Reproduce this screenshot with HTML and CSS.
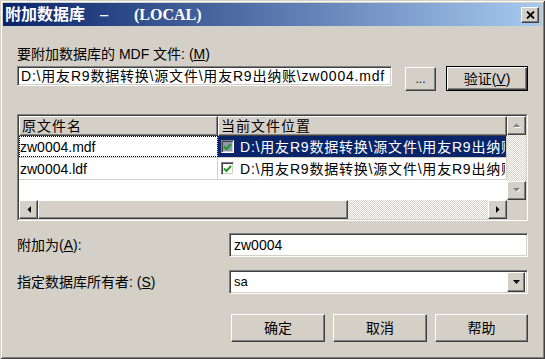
FILE: index.html
```html
<!DOCTYPE html>
<html lang="zh-CN">

<head>
    <meta charset="utf-8">
    <title>附加数据库</title>
    <link rel="stylesheet" href="styles.css">
</head>

<body>
    <div class="window">
        <!-- title bar -->
        <div class="titlebar">
            <span class="title">附加数据库<span class="dash">–</span>(LOCAL)</span>
            <button class="btn close">
                <svg width="9" height="8" viewBox="0 0 9 8"><path d="M1 0.5l7 7M8 0.5l-7 7" stroke="#000" stroke-width="1.8" fill="none"/></svg>
            </button>
        </div>

        <div class="content">
            <div class="mdf-label">要附加数据库的 MDF 文件: (<u>M</u>)</div>
            <div class="path-row">
                <div class="field path">D:\用友R9数据转换\源文件\用友R9出纳账\zw0004.mdf</div>
                <button class="btn browse">...</button>
                <button class="btn default verify">验证(<u>V</u>)</button>
            </div>

            <!-- file list -->
            <div class="files">
                <div class="files-inner">
                    <div class="files-main">
                        <div class="list">
                            <div class="list-row head">
                                <div class="hcell col-name">原文件名</div>
                                <div class="hcell col-path">当前文件位置</div>
                            </div>
                            <div class="list-row">
                                <div class="cell col-name focused">zw0004.mdf</div>
                                <div class="cell col-path selected">
                                    <span class="check">
                                        <svg width="9" height="8" viewBox="0 0 9 8"><path d="M1 3.5l2.5 2.5l4.5-5" stroke="#219821" stroke-width="2" fill="none"/></svg>
                                    </span>
                                    <span class="cell-text">D:\用友R9数据转换\源文件\用友R9出纳账</span>
                                </div>
                            </div>
                            <div class="list-row">
                                <div class="cell col-name">zw0004.ldf</div>
                                <div class="cell col-path">
                                    <span class="check">
                                        <svg width="9" height="8" viewBox="0 0 9 8"><path d="M1 3.5l2.5 2.5l4.5-5" stroke="#219821" stroke-width="2" fill="none"/></svg>
                                    </span>
                                    <span class="cell-text">D:\用友R9数据转换\源文件\用友R9出纳账</span>
                                </div>
                            </div>
                        </div>
                        <div class="vscroll">
                            <div class="btn sbtn">
                                <svg width="8" height="5" viewBox="0 0 8 5"><path d="M1 5h7l-3.5-3.5z" fill="#fff"/><path d="M0 4h7l-3.5-3.5z" fill="#808080"/></svg>
                            </div>
                            <div class="track"></div>
                            <div class="btn sbtn">
                                <svg width="8" height="5" viewBox="0 0 8 5"><path d="M1 1h7l-3.5 3.5z" fill="#fff"/><path d="M0 0h7l-3.5 3.5z" fill="#808080"/></svg>
                            </div>
                        </div>
                    </div>
                    <div class="hscroll-row">
                        <div class="hscroll">
                            <div class="btn sbtn">
                                <svg width="4" height="7" viewBox="0 0 4 7"><path d="M4 0v7L0.5 3.5z"/></svg>
                            </div>
                            <div class="btn thumb"></div>
                            <div class="track"></div>
                            <div class="btn sbtn">
                                <svg width="4" height="7" viewBox="0 0 4 7"><path d="M0 0v7L3.5 3.5z"/></svg>
                            </div>
                        </div>
                        <div class="corner"></div>
                    </div>
                </div>
            </div>

            <!-- attach options -->
            <div class="form">
                <div class="form-label">附加为(<u>A</u>):</div>
                <div class="field input">zw0004</div>
                <div class="form-label">指定数据库所有者: (<u>S</u>)</div>
                <div class="field combo">
                    <span class="combo-text">sa</span>
                    <span class="btn drop">
                        <svg width="7" height="4" viewBox="0 0 7 4"><path d="M0 0h7L3.5 4z"/></svg>
                    </span>
                </div>
            </div>

            <div class="buttons">
                <button class="btn action">确定</button>
                <button class="btn action">取消</button>
                <button class="btn action">帮助</button>
            </div>
        </div>
    </div>
</body>

</html>
```

FILE: styles.css
```css
* {
    box-sizing: border-box;
}

body {
    margin: 0;
    background-color: #d4d0c8;
    font-family: "Liberation Sans", "Noto Sans CJK SC", sans-serif;
    font-size: 14px;
    line-height: 16px;
    color: #000;
}

u {
    text-decoration: underline;
    text-underline-offset: 1px;
}

.window {
    width: 545px;
    height: 359px;
    padding: 3px;
    background-color: #d4d0c8;
    box-shadow: inset 1px 1px #d4d0c8, inset -1px -1px #404040,
        inset 2px 2px #fff, inset -2px -2px #808080;
}

/* title bar */

.titlebar {
    height: 23px;
    display: flex;
    align-items: center;
    justify-content: space-between;
    padding: 0 3px 0 2px;
    background: linear-gradient(to right, #0a246a, #a6caf0);
    color: #fff;
}

.title {
    font-family: "Liberation Serif", "Noto Sans CJK SC", serif;
    font-weight: bold;
    font-size: 16px;
    line-height: 18px;
}

.title .dash {
    margin: 0 26px 0 15px;
}

/* generic raised button */

.btn {
    display: flex;
    align-items: center;
    justify-content: center;
    padding: 0;
    background-color: #d4d0c8;
    border: 1px solid;
    border-color: #fff #404040 #404040 #fff;
    box-shadow: inset -1px -1px #808080;
    font: inherit;
    color: #000;
}

.btn.default {
    border-color: #000;
    box-shadow: inset 1px 1px #fff, inset -1px -1px #404040, inset -2px -2px #808080;
}

.close {
    width: 18px;
    height: 16px;
}

.content {
    padding: 20px 14px 0 14px;
}

/* sunken field */

.field {
    background-color: #fff;
    border: 1px solid;
    border-color: #808080 #fff #fff #808080;
    box-shadow: inset 1px 1px #404040, inset -1px -1px #d4d0c8;
    white-space: nowrap;
    overflow: hidden;
}

.path-row {
    display: flex;
    align-items: flex-start;
    margin-top: 4px;
}

.path {
    width: 375px;
    height: 20px;
    padding: 1px 3px;
    letter-spacing: 0.8px;
}

.browse {
    width: 31px;
    height: 24px;
    margin: 1px 0 0 13px;
    font-size: 12px;
}

.verify {
    width: 82px;
    height: 25px;
    margin-left: 10px;
}

/* file list */

.files {
    margin-top: 23px;
    height: 107px;
    border: 1px solid;
    border-color: #808080 #fff #fff #808080;
}

.files-inner {
    height: 100%;
    border: 1px solid;
    border-color: #404040 #d4d0c8 #d4d0c8 #404040;
    display: flex;
    flex-direction: column;
}

.files-main {
    display: flex;
    height: 84px;
}

.list {
    flex: 1;
    background-color: #fff;
    overflow: hidden;
}

.list-row {
    display: flex;
    height: 22px;
    border-bottom: 1px solid #d4d0c8;
}

.list-row.head {
    height: 20px;
    border-bottom: none;
}

.col-name {
    width: 199px;
    flex: none;
}

.col-path {
    flex: 1;
    min-width: 0;
}

.hcell {
    height: 20px;
    padding: 1px 2px;
    background-color: #d4d0c8;
    border: 1px solid;
    border-color: #fff #404040 #404040 #fff;
    box-shadow: inset -1px -1px #808080;
    white-space: nowrap;
    overflow: hidden;
    letter-spacing: 1px;
}

.cell {
    display: flex;
    align-items: center;
    padding: 0 1px;
    border-right: 1px solid #d4d0c8;
    white-space: nowrap;
    overflow: hidden;
}

.cell.focused {
    outline: 1px dotted #000;
    outline-offset: -1px;
}

.cell.selected {
    background-color: #0a246a;
    color: #fff;
}

.check {
    width: 13px;
    height: 13px;
    flex: none;
    display: flex;
    align-items: center;
    justify-content: center;
    margin: 0 6px 0 2px;
    background-color: #fff;
    border: 1px solid;
    border-color: #808080 #fff #fff #808080;
    box-shadow: inset 1px 1px #404040, inset -1px -1px #d4d0c8;
}

.selected .check {
    background-color: #8d96b5;
}

.cell-text {
    overflow: hidden;
    letter-spacing: 0.8px;
}

/* scrollbars */

.track {
    flex: 1;
    background: repeating-conic-gradient(#d4d0c8 0% 25%, #fff 0% 50%) 0 0 / 2px 2px;
}

.vscroll {
    width: 19px;
    display: flex;
    flex-direction: column;
}

.sbtn {
    width: 19px;
    height: 19px;
    flex: none;
}

.hscroll-row {
    display: flex;
    height: 19px;
}

.hscroll {
    flex: 1;
    display: flex;
}

.thumb {
    width: 310px;
    flex: none;
}

.corner {
    width: 19px;
    background-color: #d4d0c8;
}

/* attach options */

.form {
    margin-top: 12px;
    display: grid;
    grid-template-columns: 212px 1fr;
    row-gap: 13px;
    align-items: center;
}

.input {
    height: 24px;
    padding: 3px 4px;
}

.combo {
    height: 24px;
    display: flex;
    align-items: center;
    justify-content: space-between;
    padding: 2px 2px 2px 4px;
    font-size: 13px;
}

.drop {
    width: 18px;
    height: 20px;
}

.buttons {
    margin-top: 20px;
    display: flex;
    justify-content: flex-end;
    gap: 8px;
}

.action {
    width: 94px;
    height: 28px;
}

.action:last-child {
    width: 93px;
}
```
